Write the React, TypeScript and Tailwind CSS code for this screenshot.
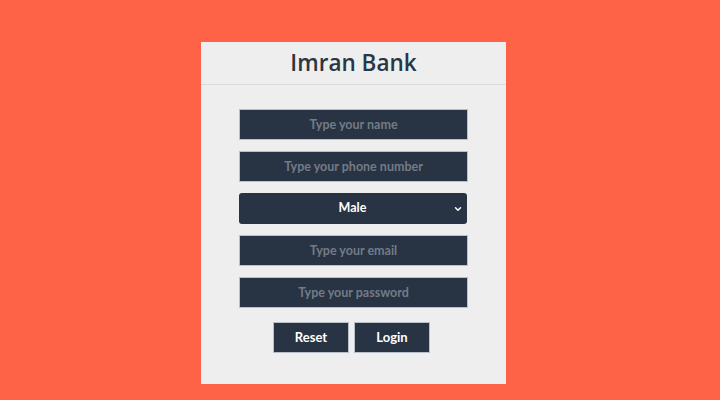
import { ChevronDown } from "lucide-react";

const fields = [
  "Type your name",
  "Type your phone number",
];

const fields2 = ["Type your email", "Type your password"];

const Field = ({ placeholder }: { placeholder: string }) => (
  <input
    type="text"
    placeholder={placeholder}
    className="h-[31px] w-[229px] border border-[#b9c0c8] bg-[#283444] text-center text-[12.5px] font-bold text-white placeholder:text-[#737b86] outline-none"
  />
);

export default function App() {
  return (
    <div
      className="min-h-[400px] bg-[#ff6347] pl-[201px] pt-[42px]"
      style={{ fontFamily: 'Lato, "Open Sans", sans-serif' }}
    >
      <div className="flex h-[342px] w-[305px] flex-col bg-[#eeeeee]">
        <div className="flex h-[43px] items-center justify-center border-b border-[#dadada]">
          <h1
            className="text-[22.5px] font-semibold leading-none text-[#2a3644]"
            style={{ fontFamily: '"Open Sans", sans-serif' }}
          >
            Imran Bank
          </h1>
        </div>

        <form className="flex flex-col items-center gap-[11px] pt-[24px]">
          {fields.map((f) => (
            <Field key={f} placeholder={f} />
          ))}

          <div className="relative -ml-[2px]">
            <select className="h-[31px] w-[228px] appearance-none rounded-[3px] bg-[#283444] text-center text-[12.5px] font-bold text-white outline-none">
              <option>Male</option>
              <option>Female</option>
            </select>
            <ChevronDown
              size={10}
              strokeWidth={3.5}
              className="pointer-events-none absolute right-[4px] top-[11px] text-white"
            />
          </div>

          {fields2.map((f) => (
            <Field key={f} placeholder={f} />
          ))}

          <div className="mr-[4px] mt-[3px] flex gap-[5px]">
            <button className="h-[31px] w-[76px] border border-[#b9c0c8] bg-[#283444] text-[13px] font-bold text-white">
              Reset
            </button>
            <button className="h-[31px] w-[76px] border border-[#b9c0c8] bg-[#283444] text-[13px] font-bold text-white">
              Login
            </button>
          </div>
        </form>
      </div>
    </div>
  );
}
